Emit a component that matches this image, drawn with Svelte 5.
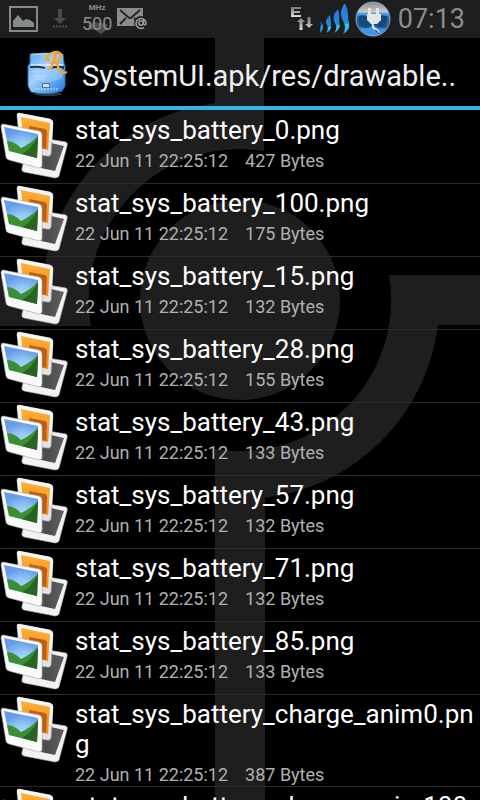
<script>
  const date = '22 Jun 11 22:25:12';
  const files = [
    { name: 'stat_sys_battery_0.png', size: 427 },
    { name: 'stat_sys_battery_100.png', size: 175 },
    { name: 'stat_sys_battery_15.png', size: 132 },
    { name: 'stat_sys_battery_28.png', size: 155 },
    { name: 'stat_sys_battery_43.png', size: 133 },
    { name: 'stat_sys_battery_57.png', size: 132 },
    { name: 'stat_sys_battery_71.png', size: 132 },
    { name: 'stat_sys_battery_85.png', size: 133 },
    { name: 'stat_sys_battery_charge_anim0.png', size: 387 },
    { name: 'stat_sys_battery_charge_anim100.png', size: 387 }
  ];
</script>

<div class="screen">
  <svg class="wallpaper" viewBox="0 0 480 762" preserveAspectRatio="xMidYMin slice" aria-hidden="true">
    <g fill="#1e1e1e">
      <circle cx="240" cy="262" r="100" />
      <path d="M215 0H264V113A151 151 0 0 0 91 288H0V238H43A199 199 0 0 1 215 65Z" />
      <path d="M480 237H389A151 151 0 0 1 215 411V762H265V460A199 199 0 0 0 438 287H480Z" />
    </g>
  </svg>

  <header class="status">
    <div class="group">
      <svg class="i-pic" width="29" height="28" viewBox="0 0 29 28" aria-label="Picture">
        <rect x="1" y="2" width="27" height="24" fill="none" stroke="#858b89" stroke-width="2" />
        <path d="M4 22V16L9 10L14 16L17 14L21 15L25 18V22Z" fill="#858b89" />
      </svg>
      <svg class="i-down" width="14" height="20" viewBox="0 0 14 20" aria-label="Download">
        <path d="M5 0H9V9H13L7 15L1 9H5Z" fill="#494b4b" />
        <path d="M0 17.5H14" stroke="#494b4b" stroke-width="2" stroke-dasharray="2 1" />
      </svg>
      <div class="cpu">
        <svg class="blob" width="22" height="13" viewBox="0 0 22 13" aria-hidden="true"><path d="M1 3L8 0L20 2L21 7L14 12L8 8L2 7Z" fill="#4c4e4e" /></svg>
        <span class="mhz">MHz</span>
        <span class="num">500</span>
      </div>
      <svg class="i-mail" width="31" height="24" viewBox="0 0 31 24" aria-label="Mail">
        <path d="M0 1H26V19H0Z" fill="#898e8c" />
        <path d="M3 3L11 10Q13 12 15 10L23 3M3 17L9 11M17 11L20 14" fill="none" stroke="#252727" stroke-width="2" />
        <circle cx="24" cy="16" r="7" fill="#1e1e1e" />
        <circle cx="24" cy="16" r="2.2" fill="none" stroke="#9a9f9d" stroke-width="1.6" />
        <path d="M26.5 13V17Q29 19 29 16A5 5 0 1 0 27 20.5" fill="none" stroke="#9a9f9d" stroke-width="1.6" />
      </svg>
    </div>
    <div class="group">
      <svg class="i-net" width="22" height="24" viewBox="0 0 22 24" aria-label="EDGE data">
        <defs><linearGradient id="net" x2="0" y2="1"><stop offset="0" stop-color="#777" /><stop offset="1" stop-color="#ddd" /></linearGradient></defs>
        <path d="M0 0H10V2H3V4H9V6H3V8H10V10H0Z" fill="url(#net)" />
        <path d="M8.500 23V15H6L10 11L14 15H11.500V23ZM16.500 10H19.500V17H22L18 21L14 17H16.500Z" fill="url(#net)" />
      </svg>
      <svg class="i-signal" width="32" height="32" viewBox="0 0 32 32" aria-label="Signal">
        <defs><linearGradient id="sig" x2="0" y2="1"><stop offset="0" stop-color="#2b78dc" /><stop offset=".65" stop-color="#2488df" /><stop offset=".7" stop-color="#3ecbf0" /><stop offset="1" stop-color="#2a9fe0" /></linearGradient></defs>
        <g fill="url(#sig)">
          <path d="M1 19Q5 21 4 25Q4 27 1 30Q2 27 1 24Q3 22 1 19Z" />
          <path d="M11 12Q12 18 12 22Q13 27 7 30Q10 26 8 22Q5 18 11 12Z" />
          <path d="M19 6Q21 14 20 18Q23 26 15 30Q19 25 16 20Q12 13 19 6Z" />
          <path d="M26 0Q30 8 29 16Q33 26 24 31Q28 24 24 18Q19 9 26 0Z" />
        </g>
      </svg>
      <svg class="i-batt" width="36" height="36" viewBox="0 0 36 36" aria-label="Charging">
        <defs>
          <linearGradient id="orb" x2="0" y2="1"><stop offset="0" stop-color="#8c8c8c" /><stop offset=".3" stop-color="#c8cacc" /><stop offset=".32" stop-color="#5ba9f5" /><stop offset=".45" stop-color="#2a72bd" /><stop offset=".75" stop-color="#1e5695" /><stop offset="1" stop-color="#59b4ff" /></linearGradient>
        </defs>
        <circle cx="18" cy="18" r="17" fill="url(#orb)" stroke="#8aa4bd" />
        <path d="M4 15Q10 13 14 17Q20 13 32 15Q34 22 27 26Q20 25 18 23Q12 29 5 24Q2 19 4 15Z" fill="#164a78" />
        <path d="M4 26Q14 29 19 24Q25 30 32 26Q27 34 18 34Q9 34 4 26Z" fill="#3d95ef" />
        <path d="M13 7H16V13H21V7H24V13H26V19L22 23H16L12 19V13H13Z" fill="#e5e5e5" />
        <path d="M18 22Q17 27 20 28Q23 29 24 32" fill="none" stroke="#e8e8e8" stroke-width="2" />
        <path d="M20 29Q23 30 24 33" fill="none" stroke="#333" stroke-width="1" />
      </svg>
      <time>07:13</time>
    </div>
  </header>

  <div class="titlebar">
    <svg width="42" height="48" viewBox="0 0 42 48" aria-label="Root Explorer">
      <defs><linearGradient id="cab" x2="1" y2="1"><stop offset="0" stop-color="#5ba8f4" /><stop offset=".4" stop-color="#a4d0ff" /><stop offset=".65" stop-color="#68aef6" /><stop offset="1" stop-color="#2379df" /></linearGradient></defs>
      <ellipse cx="21" cy="46" rx="14" ry="2" fill="#333" />
      <path d="M3 6Q19 4 36 6L37 15L38 18V38L35 43Q20 48 4 44L1 38V18L3 15Z" fill="url(#cab)" stroke="#326ba9" />
      <path d="M4 6Q19 4 35 6L34 7H5Z" fill="#b7c9db" />
      <path d="M4 16H36V19Q20 17 4 19Z" fill="#c8e4ff" />
      <path d="M4 20V19Q10 18 18 20M24 20Q29 18 36 19V21" fill="none" stroke="#1e344c" stroke-width="2" />
      <path d="M5 22Q19 19 35 22V30Q19 38 5 30Z" fill="#a5d2ff" opacity=".55" />
      <path d="M8 28H19M9 31H17M8 41H31" stroke="#d0e7ff" stroke-dasharray="2 1" />
      <rect x="15.500" y="35.500" width="7" height="4" fill="#d5dde5" stroke="#56738e" />
      <path d="M23 12Q18 13 20 9Q23 4 31 4Q36 6 33 10Q31 14 26 14Q30 14 31 19Q33 27 40 24" fill="none" stroke="#ffa324" stroke-width="2.4" />
      <path d="M29 5Q27 12 24 20L20 21" fill="none" stroke="#ffa324" stroke-width="2.600" />
    </svg>
    <h1>SystemUI.apk/res/drawable..</h1>
  </div>

  <main>
    <svg class="defs" width="0" height="0" aria-hidden="true">
      <defs>
        <linearGradient id="orange" x2="0" y2="1"><stop offset="0" stop-color="#ffae35" /><stop offset="1" stop-color="#f08a1b" /></linearGradient>
        <radialGradient id="sky" cx=".55" cy=".8" r=".7"><stop offset="0" stop-color="#b4deff" /><stop offset=".5" stop-color="#94c8f8" /><stop offset="1" stop-color="#659be8" /></radialGradient>
        <linearGradient id="grey" x2="1"><stop offset="0" stop-color="#858585" /><stop offset=".5" stop-color="#4b4b4b" /><stop offset="1" stop-color="#606060" /></linearGradient>
        <symbol id="photos" viewBox="0 0 70 68">
          <path d="M30 24L66 30Q68 31 67 34L59 64Q58 66 55 66L24 60Q21 59 22 56Z" fill="#f2f2f2" stroke="#aaa" stroke-width=".6" />
          <path d="M38 28L64 34L55 59L27 53Z" fill="url(#grey)" />
          <path d="M19 1L50 7Q53 8 53 11L51 42Q50 45 47 44L22 40Q20 39 20 37L17 3Q17 1 19 1Z" fill="#e2e2e2" stroke="#aaa" stroke-width=".6" />
          <path d="M19 1L50 7Q53 8 53 11L52 29L20 22L17 3Q17 1 19 1Z" fill="#f6f6f6" />
          <path d="M21 5L50 11L48 38L24 33Z" fill="url(#orange)" />
          <path d="M29 14L45 17Q47 18 47 20L46 37L38 35L31 28Z" fill="#bd5e16" />
          <path d="M3 12L39 19Q42 20 42 23V53Q42 56 39 56L9 48Q6 47 6 45L1 15Q1 12 3 12Z" fill="#fafafa" stroke="#aaa" stroke-width=".6" />
          <path d="M4 15L38 22L37 46L9 39Z" fill="url(#sky)" />
          <path d="M7 29Q14 29 21 36Q30 32 38 24L37 46L9 39Z" fill="#3a8f32" />
          <path d="M38 24L37 46L22 42Q31 38 38 24Z" fill="#28631f" />
        </symbol>
      </defs>
    </svg>
    <ul>
      {#each files as file}
        <li>
          <svg class="thumb" width="70" height="68" aria-hidden="true"><use href="#photos" /></svg>
          <div class="info">
            <h2>{file.name}</h2>
            <p><span>{date}</span><span>{file.size} Bytes</span></p>
          </div>
        </li>
      {/each}
    </ul>
  </main>
</div>

<style>
  :global(body) { margin: 0; background: #000; }
  .screen {
    position: relative;
    height: 100vh;
    display: flex;
    flex-direction: column;
    overflow: hidden;
    background: #000;
    font-family: Roboto, 'Noto Sans', sans-serif;
  }
  .wallpaper {
    position: absolute;
    top: 38px;
    left: 0;
    width: 100%;
    height: calc(100% - 38px);
  }
  .status {
    position: relative;
    flex: none;
    display: flex;
    justify-content: space-between;
    height: 38px;
    padding: 0 15px 0 9px;
    background: #1e1e1e;
  }
  .group { display: flex; align-items: center; }
  .i-down { margin-left: 15px; }
  .cpu {
    position: relative;
    display: flex;
    flex-direction: column;
    align-items: center;
    margin-left: 15px;
    color: #8b908e;
  }
  .blob { position: absolute; bottom: 0; left: 5px; }
  .mhz { font-size: 8px; line-height: 10px; font-weight: 700; }
  .num { position: relative; font-size: 18px; line-height: 22px; }
  .i-mail { margin-left: 5px; }
  .i-signal { margin-left: 6px; }
  .i-batt { margin-left: 4px; }
  time { margin-left: 7px; font-size: 27px; line-height: 36px; color: #8c8c8c; }
  .titlebar {
    position: relative;
    flex: none;
    display: flex;
    align-items: center;
    gap: 13px;
    height: 68px;
    padding-left: 27px;
    border-bottom: 4px solid #33b5e5;
  }
  h1 { margin: 0; padding-top: 7px; font-size: 29px; line-height: 36px; font-weight: 400; color: #f0f0f0; white-space: nowrap; }
  main { position: relative; flex: 1; min-height: 0; padding-top: 1px; overflow: hidden; }
  .defs { position: absolute; }
  ul { margin: 0; padding: 0; list-style: none; }
  li {
    display: flex;
    align-items: flex-start;
    gap: 5px;
    min-height: 72px;
    border-bottom: 1px solid #2b2b2b;
  }
  .thumb { flex: none; margin-top: 1px; }
  .info { flex: 1; min-width: 0; padding-top: 4px; }
  h2 { margin: 0; font-size: 26px; line-height: 30px; font-weight: 400; color: #fff; overflow-wrap: anywhere; }
  p { display: flex; gap: 17px; margin: 0; padding-top: 4px; font-size: 18px; line-height: 23px; color: #b0b0b0; }
</style>
